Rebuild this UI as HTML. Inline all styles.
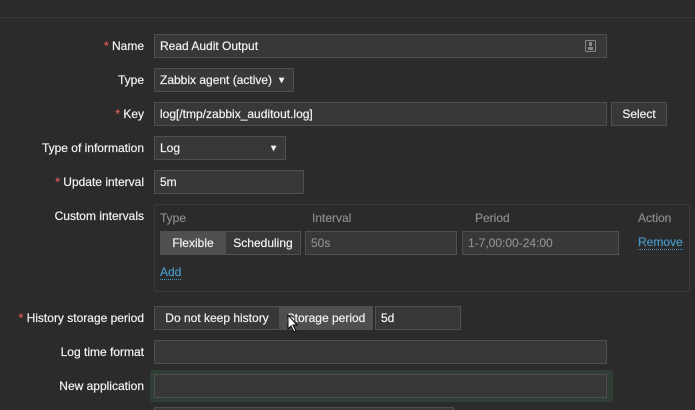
<!DOCTYPE html>
<html style="overflow:hidden;height:410px"><head><meta charset="utf-8"><style>
*{box-sizing:border-box;margin:0;padding:0}
html,body{width:695px;height:410px;overflow:hidden}
body{background:#2b2b2b;font-family:"Liberation Sans",Arial,sans-serif;font-size:12px;color:#f2f2f2;position:relative;-webkit-text-stroke:0.2px}
.top{position:absolute;left:0;top:0;width:695px;height:18px;background:#2b2b2b;border-bottom:1px solid #383838}
.lbl{position:absolute;right:551px;text-align:right;white-space:nowrap;line-height:14px}
.lbl b{color:#e45959;font-weight:normal}
.in{position:absolute;height:24px;background:#383838;border:1px solid #4f4f4f;padding-left:5px;line-height:22px;white-space:nowrap}
.arrow{position:absolute;right:7px;top:0;font-size:9px}
.btn{position:absolute;height:24px;border:1px solid #4f4f4f;background:#383838;text-align:center;line-height:22px}
.hd{position:absolute;top:211px;color:#8a8a8a}
a{color:#4796c4;text-decoration:none;border-bottom:1px dotted #4796c4;position:absolute;line-height:13px}
</style></head><body>
<div class="top"></div>

<div class="lbl" style="top:39px"><b>*</b> Name</div>
<div class="in" style="left:154px;top:34px;width:453px">Read Audit Output
<svg style="position:absolute;right:10px;top:5px" width="11" height="12"><rect x="0.5" y="0.5" width="10" height="11" rx="1" fill="none" stroke="#888"/><rect x="4" y="2" width="3" height="4" fill="#888"/><rect x="3" y="7" width="5" height="3" fill="#888"/></svg></div>

<div class="lbl" style="top:73px">Type</div>
<div class="in" style="left:154px;top:68px;width:140px">Zabbix agent (active)<span class="arrow">▼</span></div>

<div class="lbl" style="top:107px"><b>*</b> Key</div>
<div class="in" style="left:154px;top:102px;width:453px">log[/tmp/zabbix_auditout.log]</div>
<div class="btn" style="left:611px;top:102px;width:56px">Select</div>

<div class="lbl" style="top:141px">Type of information</div>
<div class="in" style="left:154px;top:136px;width:132px">Log<span class="arrow">▼</span></div>

<div class="lbl" style="top:175px"><b>*</b> Update interval</div>
<div class="in" style="left:154px;top:170px;width:150px">5m</div>

<div class="lbl" style="top:209px">Custom intervals</div>
<div style="position:absolute;left:154px;top:204px;width:536px;height:88px;border:1px solid #383838"></div>
<div class="hd" style="left:160px">Type</div>
<div class="hd" style="left:312px">Interval</div>
<div class="hd" style="left:475px">Period</div>
<div class="hd" style="left:638px">Action</div>
<div class="btn" style="left:160px;top:231px;width:141px;background:#383838"></div>
<div class="btn" style="left:160px;top:231px;width:66px;background:#4f4f4f;border-color:#4f4f4f">Flexible</div>
<div style="position:absolute;left:226px;top:232px;width:74px;line-height:22px;text-align:center">Scheduling</div>
<div class="in" style="left:305px;top:231px;width:152px;color:#8a8a8a">50s</div>
<div class="in" style="left:462px;top:231px;width:157px;color:#8a8a8a">1-7,00:00-24:00</div>
<a style="left:638px;top:236px">Remove</a>
<a style="left:160px;top:266px">Add</a>

<div class="lbl" style="top:311px"><b>*</b> History storage period</div>
<div class="btn" style="left:154px;top:306px;width:126px">Do not keep history</div>
<div class="btn" style="left:279px;top:306px;width:94px;background:#4f4f4f;border-color:#4f4f4f">Storage period</div>
<div class="in" style="left:375px;top:306px;width:86px">5d</div>
<svg style="position:absolute;left:287px;top:314px" width="12" height="19"><path d="M1 1 L1 15 L4 12 L7 18 L9 17 L6 11 L10 11 Z" fill="#fff" stroke="#000" stroke-width="1"/></svg>

<div class="lbl" style="top:345px">Log time format</div>
<div class="in" style="left:154px;top:340px;width:453px"></div>

<div class="lbl" style="top:379px">New application</div>
<div style="position:absolute;left:150px;top:370px;width:463px;height:32px;background:#2f3d35;border-radius:2px"></div>
<div class="in" style="left:154px;top:374px;width:453px"></div>

<div style="position:absolute;left:154px;top:407px;width:300px;height:3px;border:1px solid #4f4f4f;border-bottom:none;background:#383838"></div>
</body></html>
